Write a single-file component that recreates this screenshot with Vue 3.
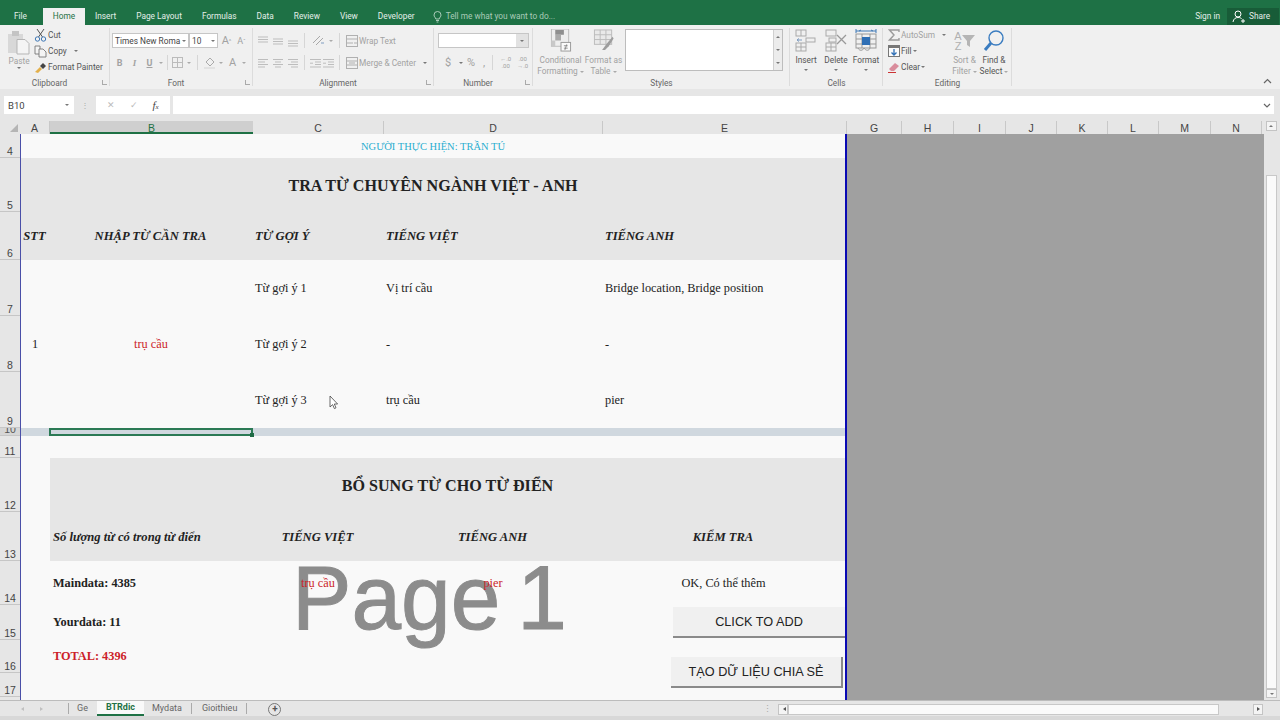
<template>
  <div class="excel">
    <!-- thanh tiêu đề -->
    <header class="titlebar">
      <div class="doc-title"><span>BTRdic - Excel</span></div>
      <div class="menu">
        <span v-for="tab in menuTabs" :key="tab" class="menu-tab" :class="{ active: tab === 'Home', file: tab === 'File' }">{{ tab }}</span>
        <span class="tell-me">
          <svg width="9" height="12" viewBox="0 0 9 12" fill="none" stroke="#b9d5c5" stroke-width="0.9"><path d="M2.8 8C2.6 6.4 1 5.9 1 4A3.5 3.5 0 0 1 8 4C8 5.9 6.4 6.4 6.2 8ZM3 9.5H6M3.6 11H5.4" /></svg>
          Tell me what you want to do...
        </span>
        <span class="sign-in">Sign in</span>
        <span class="share">
          <svg width="14" height="13" viewBox="0 0 14 13" fill="none" stroke="#fff" stroke-width="1"><circle cx="6" cy="4" r="3" /><path d="M1 12C1.5 8.8 3.5 7.5 6 7.5S9 8.2 9.8 9M9 11H13M11 9V13" /></svg>
          Share
        </span>
      </div>
    </header>

    <!-- ribbon -->
    <section class="ribbon">
      <div class="group clipboard">
        <div class="group-body">
          <div class="paste">
            <svg width="24" height="25" viewBox="0 0 24 25"><rect x="1" y="4" width="15" height="19" fill="#d8d8d8" /><rect x="5" y="1" width="7" height="5" fill="#c4c4c4" /><path d="M10 9.5H18L22 13.5V24H10Z" fill="#f4f4f4" stroke="#b5b5b5" /></svg>
            <span class="dim">Paste</span>
            <i class="caret"></i>
          </div>
          <div class="stack">
            <div class="tool">
              <svg width="13" height="14" viewBox="0 0 13 14" fill="none" stroke="#555" stroke-width="1"><path d="M3 1L8.5 9M10 1L4.5 9" /><circle cx="3.5" cy="11" r="2.2" stroke="#3f78b5" /><circle cx="9.5" cy="11" r="2.2" stroke="#3f78b5" /></svg>
              Cut
            </div>
            <div class="tool">
              <svg width="13" height="13" viewBox="0 0 13 13" fill="#f4f4f4" stroke="#777" stroke-width="0.9"><path d="M1 1H6V9H1Z" /><path d="M5 4H9L12 7V12H5Z" /></svg>
              Copy <i class="caret spaced"></i>
            </div>
            <div class="tool">
              <svg width="13" height="13" viewBox="0 0 13 13"><path d="M1 11L6 6L8 8L4 12Z" fill="#e3b04b" /><path d="M6 5L9 2L12 5L9 8Z" fill="#444" /></svg>
              Format Painter
            </div>
          </div>
        </div>
        <div class="group-label">Clipboard<i class="launcher"></i></div>
      </div>

      <div class="group font">
        <div class="group-body rows">
          <div class="line">
            <span class="combo font-name">Times New Roma<i class="caret"></i></span>
            <span class="combo font-size">10<i class="caret"></i></span>
            <span class="cell-btn grow-a">A<sup>^</sup></span>
            <span class="cell-btn shrink-a">A<sup>ˇ</sup></span>
          </div>
          <div class="line">
            <span class="cell-btn dim bold">B</span>
            <span class="cell-btn dim ital">I</span>
            <span class="cell-btn dim under">U</span>
            <i class="caret slot"></i>
            <i class="sep tight"></i>
            <span class="cell-btn">
              <svg width="11" height="11" viewBox="0 0 11 11" fill="none" stroke="#bbb"><rect x="0.5" y="0.5" width="10" height="10" /><path d="M5.5 0V11M0 5.5H11" /></svg>
            </span>
            <i class="caret slot"></i>
            <i class="sep"></i>
            <span class="cell-btn">
              <svg width="13" height="13" viewBox="0 0 13 13"><path d="M3 6L7 2L11 6L7 10Z" fill="none" stroke="#aaa" /><rect x="1" y="11" width="11" height="2" fill="#e2e2e2" /></svg>
            </span>
            <i class="caret slot"></i>
            <span class="cell-btn dim big-a">A</span>
            <i class="caret slot"></i>
          </div>
        </div>
        <div class="group-label">Font<i class="launcher"></i></div>
      </div>

      <div class="group alignment">
        <div class="group-body rows">
          <div class="line">
            <svg v-for="icon in alignTop" :key="icon" class="lines" width="15" height="12" viewBox="0 0 15 12" stroke="#bdbdbd"><path :d="icon" /></svg>
            <i class="sep"></i>
            <span class="cell-btn orient">
              <svg width="15" height="13" viewBox="0 0 15 13" fill="none" stroke="#a8a8a8"><path d="M2 9L9 2M5 11L12 4" /><path d="M10 9H13" stroke="#7f9cc0" /></svg>
            </span>
            <i class="caret slot"></i>
            <i class="sep"></i>
            <span class="tool dim wide">
              <svg width="12" height="12" viewBox="0 0 12 12" fill="none" stroke="#b0b0b0"><rect x="0.5" y="0.5" width="11" height="11" /><path d="M0 4H12M0 8H7M8 8H11" /></svg>
              Wrap Text
            </span>
          </div>
          <div class="line">
            <svg v-for="icon in alignLeft" :key="icon" class="lines" width="15" height="12" viewBox="0 0 15 12" stroke="#bdbdbd"><path :d="icon" /></svg>
            <i class="sep"></i>
            <svg v-for="icon in indents" :key="icon" class="lines" width="13" height="12" viewBox="0 0 13 12" stroke="#bdbdbd"><path :d="icon" /></svg>
            <i class="sep"></i>
            <span class="tool dim wide">
              <svg width="12" height="12" viewBox="0 0 12 12" fill="none" stroke="#b0b0b0"><rect x="0.5" y="0.5" width="11" height="11" /><path d="M0 4H12M0 8H12M3 6H9" /></svg>
              Merge &amp; Center <i class="caret spaced"></i>
            </span>
          </div>
        </div>
        <div class="group-label">Alignment<i class="launcher"></i></div>
      </div>

      <div class="group number">
        <div class="group-body rows">
          <div class="line">
            <span class="combo number-format"><b class="combo-arrow"><i class="caret"></i></b></span>
          </div>
          <div class="line num-tools">
            <span class="dim sym">$</span><i class="caret"></i>
            <span class="dim sym">%</span>
            <span class="dim comma">,</span>
            <i class="sep num-sep"></i>
            <span class="dim decimals">←.0<br />.00</span>
            <span class="dim decimals">.00<br />→.0</span>
          </div>
        </div>
        <div class="group-label">Number<i class="launcher"></i></div>
      </div>

      <div class="group styles">
        <div class="group-body">
          <div class="big-btn style-btn dim">
            <svg width="22" height="24" viewBox="0 0 22 24"><rect x="1" y="0" width="18" height="18" fill="#eee" stroke="#bbb" /><rect x="5" y="1" width="9" height="5" fill="#8f8f8f" /><rect x="5" y="6" width="6" height="6" fill="#aaa" /><rect x="1" y="12" width="4" height="6" fill="#c8c8c8" /><rect x="11" y="14" width="10" height="9" fill="#fafafa" stroke="#999" /><path d="M14 17.5H18M14 20H18M15 22L17 16" stroke="#777" fill="none" stroke-width="0.8" /></svg>
            <span>Conditional<br />Formatting <i class="caret inline"></i></span>
          </div>
          <div class="big-btn style-btn dim">
            <svg width="22" height="24" viewBox="0 0 22 24" fill="none"><rect x="1" y="1" width="18" height="15" fill="#e9e9e9" stroke="#bbb" /><path d="M7 1V16M13 1V16M1 6H19M1 11H19" stroke="#bbb" /><path d="M9 22L14 15L20 8L21 10L16 18L12 22Z" fill="#9d9d9d" /></svg>
            <span>Format as<br />Table <i class="caret inline"></i></span>
          </div>
          <div class="gallery">
            <div class="gallery-bar"><i class="caret up"></i><i class="caret"></i><i class="caret"></i></div>
          </div>
        </div>
        <div class="group-label plain">Styles</div>
      </div>

      <div class="group cells-group">
        <div class="group-body">
          <div class="big-btn cell-col">
            <svg width="22" height="23" viewBox="0 0 22 23" fill="none" stroke="#aaa"><rect x="1" y="1" width="10" height="6" /><path d="M6 1V7" /><rect x="11" y="9" width="9" height="4" /><path d="M7 11H2M4 9.5L2 11L4 12.5" stroke="#7f9cc0" /><rect x="1" y="14" width="10" height="8" /><path d="M6 14V22M1 18H11" /></svg>
            <span>Insert</span><i class="caret"></i>
          </div>
          <div class="big-btn cell-col">
            <svg width="22" height="23" viewBox="0 0 22 23" fill="none" stroke="#aaa"><rect x="1" y="1" width="10" height="6" /><rect x="4" y="9" width="7" height="4" /><rect x="1" y="14" width="10" height="8" /><path d="M6 14V22M1 18H11" /><path d="M12 6L21 15M21 6L12 15" stroke="#999" stroke-width="1.3" /></svg>
            <span>Delete</span><i class="caret"></i>
          </div>
          <div class="big-btn cell-col">
            <svg width="22" height="23" viewBox="0 0 22 23" fill="none" stroke="#999"><path d="M1 2H21M1 0V4M21 0V4M4 2L6 1M18 2L16 1" stroke="#3f78b5" /><rect x="1" y="5" width="20" height="14" /><path d="M7 5V19M15 5V19M1 10H21M1 15H21" /><rect x="7" y="8" width="8" height="8" fill="#2f6fb5" stroke="none" /><path d="M3 19C4 22 8 22 9 19M9 19C11 22 14 22 15 19" /></svg>
            <span>Format</span><i class="caret"></i>
          </div>
        </div>
        <div class="group-label plain">Cells</div>
      </div>

      <div class="group editing">
        <div class="group-body">
          <div class="stack edit-stack">
            <div class="tool dim">
              <svg width="12" height="12" viewBox="0 0 12 12" fill="none" stroke="#9a9a9a" stroke-width="1.4"><path d="M11 3V1H1.5L6 6L1.5 11H11V9" /></svg>
              AutoSum <i class="caret spaced"></i>
            </div>
            <div class="tool">
              <svg width="12" height="12" viewBox="0 0 12 12"><rect x="0.5" y="0.5" width="11" height="11" fill="#fafafa" stroke="#777" /><rect x="1" y="1" width="10" height="2" fill="#777" /><path d="M6 4V10M3.5 7.5L6 10L8.5 7.5" fill="none" stroke="#2f6fb5" stroke-width="1.3" /></svg>
              Fill <i class="caret"></i>
            </div>
            <div class="tool">
              <svg width="12" height="12" viewBox="0 0 12 12"><path d="M1 8L7 2L11 5L6 10H3Z" fill="#d98c9c" /><path d="M0 11.5H8" stroke="#c33" /></svg>
              Clear <i class="caret"></i>
            </div>
          </div>
          <div class="big-btn sort dim">
            <div class="sort-icon">
              <span class="az">A<br />Z</span>
              <svg width="13" height="13" viewBox="0 0 13 13"><path d="M0 1H13L8 7V13L5 11V7Z" fill="#b5b5b5" /></svg>
            </div>
            <span>Sort &amp;<br />Filter <i class="caret inline"></i></span>
          </div>
          <div class="big-btn find">
            <svg width="22" height="23" viewBox="0 0 22 23" fill="none" stroke="#3a7cc0"><circle cx="13" cy="9" r="7" stroke-width="1.4" /><path d="M8 14L2 21" stroke-width="3" /></svg>
            <span>Find &amp;<br />Select <i class="caret inline"></i></span>
          </div>
        </div>
        <div class="group-label plain">Editing</div>
      </div>

      <div class="ribbon-fill">
        <svg width="9" height="6" viewBox="0 0 9 6" fill="none" stroke="#666" stroke-width="1.2"><path d="M1 5L4.5 1.5L8 5" /></svg>
      </div>
    </section>

    <!-- thanh công thức -->
    <section class="formula-bar">
      <div class="name-box">B10<i class="caret"></i></div>
      <span class="dots">⋮</span>
      <div class="fx-box">
        <span class="fx-x">✕</span>
        <span class="fx-x">✓</span>
        <span class="fx">f<small>x</small></span>
      </div>
      <div class="formula-input">
        <svg width="8" height="5" viewBox="0 0 8 5" fill="none" stroke="#666" stroke-width="1.2"><path d="M1 1L4 4L7 1" /></svg>
      </div>
    </section>

    <!-- tiêu đề cột -->
    <section class="col-heads">
      <div class="corner"><i class="corner-mark"></i></div>
      <div
        v-for="col in columns"
        :key="col.name"
        class="col-head"
        :class="{ selected: col.name === 'B' }"
        :style="{ width: col.width + 'px' }"
      >
        {{ col.name }}
      </div>
      <div class="col-rest"><span class="arrow-box"><i class="caret up"></i></span></div>
    </section>

    <section class="sheet">
      <div class="row-heads">
        <div
          v-for="row in rows"
          :key="row.num"
          class="row-head"
          :class="{ selected: row.num === 10 }"
          :style="{ height: row.height + 'px' }"
        >
          {{ row.num }}
        </div>
      </div>

      <div class="cells">
        <div class="watermark">Page 1</div>

        <div class="cell all author">NGƯỜI THỰC HIỆN: TRẦN TÚ</div>
        <div class="cell all band title">TRA TỪ CHUYÊN NGÀNH VIỆT - ANH</div>

        <div class="cell band head center">STT</div>
        <div class="cell band head center">NHẬP TỪ CẦN TRA</div>
        <div class="cell band head left">TỪ GỢI Ý</div>
        <div class="cell band head left">TIẾNG VIỆT</div>
        <div class="cell band head left">TIẾNG ANH</div>

        <div class="cell center merged">1</div>
        <div class="cell center merged red">trụ cầu</div>
        <template v-for="item in suggestions" :key="item.label">
          <div class="cell left">{{ item.label }}</div>
          <div class="cell left">{{ item.vi }}</div>
          <div class="cell left">{{ item.en }}</div>
        </template>

        <div class="cell hilite"></div>
        <div class="cell hilite picked"><i class="handle"></i></div>
        <div class="cell hilite wide-3"></div>

        <div class="cell all"></div>

        <div class="cell"></div>
        <div class="cell wide-4 band title">BỔ SUNG TỪ CHO TỪ ĐIỂN</div>

        <div class="cell"></div>
        <div class="cell band head left count">Số lượng từ có trong từ điển</div>
        <div class="cell band head center">TIẾNG VIỆT</div>
        <div class="cell band head center">TIẾNG ANH</div>
        <div class="cell band head center">KIỂM TRA</div>

        <div class="cell"></div>
        <div class="cell left strong count">Maindata: 4385</div>
        <div class="cell center red">trụ cầu</div>
        <div class="cell center red">pier</div>
        <div class="cell center">OK, Có thể thêm</div>

        <div class="cell"></div>
        <div class="cell left strong count lift">Yourdata: 11</div>
        <div class="cell wide-3"></div>

        <div class="cell"></div>
        <div class="cell left strong count red lift">TOTAL: 4396</div>
        <div class="cell wide-3"></div>

        <button class="sheet-btn add-btn">CLICK TO ADD</button>
        <button class="sheet-btn share-btn">TẠO DỮ LIỆU CHIA SẺ</button>

        <svg class="pointer" width="10" height="15" viewBox="0 0 10 15"><path d="M1 1V12L3.6 9.6L5.4 13.6L7 12.8L5.3 9H8.6Z" fill="#fff" stroke="#444" stroke-width="0.8" /></svg>
      </div>

      <div class="outside"></div>

      <div class="vscroll">
        <div class="v-thumb"></div>
        <span class="arrow-box"><i class="caret"></i></span>
      </div>
    </section>

    <!-- tab sheet -->
    <footer class="tabs-bar">
      <div class="tab-nav"><i class="tri left"></i><i class="tri right"></i></div>
      <div class="sheet-tabs">
        <span v-for="tab in sheetTabs" :key="tab" class="sheet-tab" :class="{ active: tab === 'BTRdic' }">{{ tab }}</span>
      </div>
      <span class="add-sheet">+</span>
      <div class="h-scroll">
        <span class="dots">⋮</span>
        <span class="arrow-box h"><i class="tri left dark"></i></span>
        <div class="h-thumb"></div>
        <span class="arrow-box h end"><i class="tri right dark"></i></span>
      </div>
    </footer>
    <div class="status"></div>
  </div>
</template>

<script setup>
const menuTabs = ['File', 'Home', 'Insert', 'Page Layout', 'Formulas', 'Data', 'Review', 'View', 'Developer']

const alignTop = ['M3 2H13M3 4.5H13M3 7H13', 'M3 4H13M3 6.5H13M3 9H13', 'M3 6H13M3 8.5H13M3 11H13']
const alignLeft = ['M3 2.5H13M3 5H10M3 7.5H13M3 10H10', 'M3 2.5H13M5 5H11M3 7.5H13M5 10H11', 'M3 2.5H13M6 5H13M3 7.5H13M6 10H13']
const indents = ['M1 2.5H12M6 5H12M6 7.5H12M1 10H12M1 6.2H4', 'M1 2.5H12M6 5H12M6 7.5H12M1 10H12M1 6.2H4']

const columns = [
  { name: 'A', width: 30 },
  { name: 'B', width: 203 },
  { name: 'C', width: 131 },
  { name: 'D', width: 219 },
  { name: 'E', width: 244 },
  { name: 'G', width: 55 },
  { name: 'H', width: 52 },
  { name: 'I', width: 52 },
  { name: 'J', width: 51 },
  { name: 'K', width: 51 },
  { name: 'L', width: 51 },
  { name: 'M', width: 52 },
  { name: 'N', width: 51 },
]

const rows = [
  { num: 4, height: 24 },
  { num: 5, height: 54 },
  { num: 6, height: 48 },
  { num: 7, height: 56 },
  { num: 8, height: 56 },
  { num: 9, height: 56 },
  { num: 10, height: 8 },
  { num: 11, height: 22 },
  { num: 12, height: 54 },
  { num: 13, height: 49 },
  { num: 14, height: 44 },
  { num: 15, height: 35 },
  { num: 16, height: 33 },
  { num: 17, height: 24 },
]

const suggestions = [
  { label: 'Từ gợi ý 1', vi: 'Vị trí cầu', en: 'Bridge location, Bridge position' },
  { label: 'Từ gợi ý 2', vi: '-', en: '-' },
  { label: 'Từ gợi ý 3', vi: 'trụ cầu', en: 'pier' },
]

const sheetTabs = ['Ge', 'BTRdic', 'Mydata', 'Gioithieu']
</script>

<style>
html,
body {
  margin: 0;
  background: #e6e6e6;
}
</style>

<style scoped>
.excel {
  width: 1280px;
  height: 720px;
  overflow: hidden;
  display: flex;
  flex-direction: column;
  font-family: Roboto, "Liberation Sans", sans-serif;
  font-size: 8.3px;
  color: #555;
  background: #e6e6e6;
}

.caret {
  display: inline-block;
  width: 0;
  height: 0;
  border-left: 2px solid transparent;
  border-right: 2px solid transparent;
  border-top: 2px solid #777;
  flex: none;
}

.caret.up {
  border-top: 0;
  border-bottom: 2px solid #777;
}

.caret.spaced {
  margin-left: 6px;
}

.caret.inline {
  vertical-align: middle;
  border-top-color: #aaa;
}

.caret.slot {
  margin: 0 2px;
  border-top-color: #aaa;
}

.dim {
  color: #a2a2a2;
}

/* title bar */
.titlebar {
  height: 25px;
  flex: none;
  background: #1e7145;
  color: #e4efe9;
}

.doc-title {
  height: 8px;
  overflow: hidden;
  text-align: center;
  position: relative;
}

.doc-title span {
  position: absolute;
  left: 612px;
  top: -9px;
  font-size: 9px;
}

.menu {
  height: 17px;
  display: flex;
  align-items: stretch;
  line-height: 17px;
}

.menu-tab {
  padding: 0 10px;
  white-space: nowrap;
}

.menu-tab.file {
  width: 43px;
  padding: 0 0 0 14px;
  box-sizing: border-box;
}

.menu-tab.active {
  width: 42px;
  box-sizing: border-box;
  text-align: center;
  padding: 0;
  background: #f0f0f0;
  color: #1e7145;
}

.tell-me {
  display: flex;
  align-items: center;
  gap: 4px;
  margin-left: 8px;
  color: #a9cbb8;
}

.sign-in {
  margin-left: auto;
}

.share {
  display: flex;
  align-items: center;
  gap: 3px;
  width: 52px;
  margin: 0 1px 0 7px;
  padding-left: 5px;
  box-sizing: border-box;
  background: #185c38;
}

/* ribbon */
.ribbon {
  height: 64px;
  flex: none;
  display: flex;
  background: #f0f0f0;
}

.group {
  position: relative;
  display: flex;
  flex-direction: column;
  box-sizing: border-box;
  flex: none;
}

.group::after {
  content: "";
  position: absolute;
  right: 0;
  top: 3px;
  bottom: 3px;
  width: 1px;
  background: #dcdcdc;
}

.group-body {
  height: 52px;
  flex: none;
  display: flex;
}

.group-body.rows {
  flex-direction: column;
  padding: 8px 0 0 2px;
  box-sizing: border-box;
  gap: 7px;
}

.group-label {
  flex: none;
  position: relative;
  text-align: center;
  line-height: 12px;
  color: #666;
  font-size: 8.3px;
  padding-right: 11px;
}

.group-label.plain {
  padding-right: 0;
}

.launcher {
  position: absolute;
  right: 3px;
  top: 3px;
  width: 4px;
  height: 4px;
  border-left: 1px solid #aaa;
  border-bottom: 1px solid #aaa;
}

.clipboard {
  width: 110px;
}

.font {
  width: 143px;
}

.alignment {
  width: 181px;
}

.number {
  width: 99px;
}

.styles {
  width: 257px;
}

.cells-group {
  width: 93px;
}

.editing {
  width: 129px;
}

.ribbon-fill {
  flex: 1;
  display: flex;
  justify-content: flex-end;
  align-items: flex-end;
  padding: 0 8px 5px 0;
}

.paste {
  width: 28px;
  margin-left: 5px;
  padding-top: 5px;
  display: flex;
  flex-direction: column;
  align-items: center;
  gap: 1px;
}

.stack {
  display: flex;
  flex-direction: column;
  margin-left: 1px;
  padding-top: 2px;
}

.tool {
  height: 16px;
  display: flex;
  align-items: center;
  gap: 1px;
  white-space: nowrap;
}

.line {
  height: 15px;
  display: flex;
  align-items: center;
}

.combo {
  height: 15px;
  box-sizing: border-box;
  background: #fff;
  border: 1px solid #c6c6c6;
  display: flex;
  align-items: center;
  justify-content: space-between;
  padding: 0 2px;
  color: #444;
  white-space: nowrap;
  overflow: hidden;
}

.font-name {
  width: 77px;
}

.font-size {
  width: 29px;
}

.cell-btn {
  width: 15px;
  display: flex;
  justify-content: center;
  align-items: center;
  flex: none;
  color: #a2a2a2;
  font-size: 9px;
}

.cell-btn sup {
  font-size: 6px;
  line-height: 0;
}

.grow-a {
  margin-left: 1px;
  font-size: 11px;
}

.shrink-a {
  font-size: 9px;
}

.bold {
  font-weight: 700;
}

.ital {
  font-style: italic;
  font-family: "Liberation Serif", serif;
  font-weight: 700;
}

.under {
  text-decoration: underline;
  font-weight: 700;
}

.big-a {
  font-size: 11px;
}

.sep {
  width: 1px;
  height: 15px;
  margin: 0 4px;
  flex: none;
  background: #d6d6d6;
}

.sep.tight {
  margin: 0 2px;
}

.sep.num-sep {
  margin: 0 2px;
}

.lines {
  flex: none;
  fill: none;
}

.wide {
  margin-left: 2px;
}

.orient {
  width: 18px;
}

.number-format {
  width: 91px;
  margin-left: 2px;
  padding: 0;
  justify-content: flex-end;
}

.combo-arrow {
  width: 12px;
  height: 13px;
  background: #e2e2e2;
  display: flex;
  align-items: center;
  justify-content: center;
}

.num-tools {
  padding-left: 9px;
  gap: 4px;
}

.sym {
  font-size: 11px;
  width: 10px;
}

.comma {
  font-size: 11px;
  margin: 0 1px 0 2px;
}

.decimals {
  font-size: 6px;
  line-height: 6.5px;
  width: 13px;
  text-align: center;
}

.big-btn {
  display: flex;
  flex-direction: column;
  align-items: center;
  line-height: 11px;
  text-align: center;
  white-space: nowrap;
}

.style-btn {
  width: 43px;
  padding-top: 4px;
  gap: 3px;
}

.style-btn:first-child {
  margin-left: 6px;
}

.gallery {
  width: 158px;
  height: 42px;
  margin-top: 4px;
  box-sizing: border-box;
  background: #fff;
  border: 1px solid #bdbdbd;
  display: flex;
  justify-content: flex-end;
}

.gallery-bar {
  width: 8px;
  background: #ececec;
  border-left: 1px solid #d0d0d0;
  display: flex;
  flex-direction: column;
  align-items: center;
  justify-content: space-around;
}

.cell-col {
  width: 30px;
  padding-top: 4px;
  gap: 3px;
}

.cell-col:first-child {
  margin-left: 1px;
}

.edit-stack {
  width: 62px;
  margin-left: 5px;
}

.sort {
  width: 29px;
  padding-top: 4px;
}

.sort-icon {
  height: 24px;
  display: flex;
  align-items: center;
  gap: 0;
  margin-bottom: 3px;
}

.az {
  font-family: "Liberation Sans", sans-serif;
  font-size: 11px;
  line-height: 10px;
  color: #b0b0b0;
}

.find {
  width: 30px;
  padding-top: 4px;
  gap: 3px;
}

/* formula bar */
.formula-bar {
  height: 18px;
  flex: none;
  margin-top: 7px;
  display: flex;
  align-items: stretch;
}

.name-box {
  width: 70px;
  margin-left: 4px;
  box-sizing: border-box;
  padding: 0 5px 0 4px;
  background: #fff;
  display: flex;
  align-items: center;
  justify-content: space-between;
  font-size: 9.5px;
  color: #444;
}

.dots {
  width: 22px;
  text-align: center;
  color: #aaa;
  line-height: 18px;
}

.fx-box {
  width: 74px;
  background: #fff;
  display: flex;
  align-items: center;
  justify-content: space-around;
  padding: 0 4px;
  box-sizing: border-box;
}

.fx-x {
  color: #bbb;
  font-size: 9px;
}

.fx {
  font-family: "Liberation Serif", serif;
  font-style: italic;
  font-size: 11px;
  color: #444;
}

.fx small {
  font-size: 7px;
}

.formula-input {
  width: 1101px;
  margin-left: 3px;
  background: #fff;
  display: flex;
  align-items: center;
  justify-content: flex-end;
  padding-right: 3px;
  box-sizing: border-box;
}

/* column and row headers */
.col-heads {
  height: 13px;
  flex: none;
  margin-top: 7px;
  display: flex;
  font-family: "Liberation Sans", sans-serif;
  font-size: 10.5px;
  line-height: 15px;
  color: #444;
}

.corner {
  width: 20px;
  position: relative;
}

.corner-mark {
  position: absolute;
  right: 2px;
  bottom: 2px;
  width: 0;
  height: 0;
  border-left: 8px solid transparent;
  border-bottom: 8px solid #b5b5b5;
}

.col-head {
  flex: none;
  box-sizing: border-box;
  text-align: center;
  border-right: 1px solid #c8c8c8;
  overflow: hidden;
}

.col-head.selected {
  background: #cfcfcf;
  border-bottom: 2px solid #1e7145;
  border-right: 0;
  color: #1e7145;
  line-height: 14px;
}

.col-rest {
  flex: 1;
  display: flex;
  justify-content: center;
}

.arrow-box {
  width: 11px;
  height: 10px;
  background: #f4f4f4;
  border: 1px solid #c4c4c4;
  box-sizing: border-box;
  display: flex;
  align-items: center;
  justify-content: center;
  flex: none;
}

.sheet {
  height: 566px;
  flex: none;
  display: flex;
}

.row-heads {
  width: 20px;
  flex: none;
  font-family: "Liberation Sans", sans-serif;
  font-size: 10.5px;
  color: #444;
}

.row-head {
  box-sizing: border-box;
  overflow: hidden;
  display: flex;
  justify-content: center;
  align-items: flex-end;
  border-bottom: 1px solid #c6c6c6;
  line-height: 11px;
}

.row-head.selected {
  background: #d6d6d6;
  color: #555;
}

/* sheet */
.cells {
  width: 827px;
  flex: none;
  box-sizing: border-box;
  position: relative;
  background: #f9f9f9;
  border-left: 1px solid #4a4fa8;
  border-right: 2px solid #0a0ab4;
  display: grid;
  grid-template-columns: 29px 203px 131px 219px 242px;
  grid-template-rows: 24px 54px 48px 56px 56px 56px 8px 22px 54px 49px 44px 35px 33px;
  font-family: "Liberation Serif", serif;
  font-size: 12.3px;
  color: #222;
  align-content: start;
}

.cell {
  display: flex;
  align-items: center;
  white-space: nowrap;
  min-width: 0;
  padding-top: 1px;
  box-sizing: border-box;
}

.center {
  justify-content: center;
  padding-right: 1px;
}

.head.center {
  padding-right: 2px;
}

.left {
  padding-left: 2px;
}

.all {
  grid-column: span 5;
  justify-content: center;
}

.wide-4 {
  grid-column: span 4;
  justify-content: center;
}

.wide-3 {
  grid-column: span 3;
}

.merged {
  grid-row: span 3;
}

.author {
  color: #2aaed0;
  font-size: 10.5px;
}

.band {
  background: #e6e6e6;
}

.title {
  font-size: 16.1px;
  font-weight: 700;
}

.head {
  font-size: 12.6px;
  font-weight: 700;
  font-style: italic;
}

.count {
  padding-left: 3px;
}

.strong {
  font-weight: 700;
}

.lift {
  padding-top: 0;
  padding-bottom: 1px;
}

.red {
  position: relative;
  z-index: 1;
  color: #cc1f2a;
}

.hilite {
  background: #d0d8df;
}

.picked {
  position: relative;
  box-sizing: border-box;
  border: 2px solid #2b7a55;
  margin-left: -1px;
}

.handle {
  position: absolute;
  right: -3px;
  bottom: -3px;
  width: 4px;
  height: 4px;
  background: #1e6b45;
}

.watermark {
  position: absolute;
  left: 271px;
  top: 418px;
  font-family: "Liberation Sans", sans-serif;
  font-size: 91px;
  line-height: 1;
  color: #8c8c8c;
  white-space: nowrap;
  word-spacing: -8px;
  -webkit-text-stroke: 1px #8c8c8c;
  transform: scaleX(0.98);
  transform-origin: left top;
}

.sheet-btn {
  position: absolute;
  width: 172px;
  box-sizing: border-box;
  border: 0;
  padding: 0;
  background: #f0f0f0;
  font-family: "Liberation Sans", sans-serif;
  font-size: 12.7px;
  color: #222;
  z-index: 2;
}

.add-btn {
  left: 652px;
  top: 473px;
  height: 31px;
  border-bottom: 2px solid #8a8a8a;
}

.share-btn {
  left: 650px;
  top: 523px;
  height: 31px;
  border-bottom: 2px solid #8a8a8a;
  border-right: 2px solid #8a8a8a;
}

.pointer {
  position: absolute;
  left: 308px;
  top: 261px;
  z-index: 2;
}

.outside {
  flex: 1;
  background: #a0a0a0;
}

.vscroll {
  width: 16px;
  flex: none;
  box-sizing: border-box;
  padding: 41px 3px 2px 2px;
  display: flex;
  flex-direction: column;
  gap: 0;
}

.v-thumb {
  flex: 1;
  background: #fafafa;
  border: 1px solid #c8c8c8;
  box-sizing: border-box;
}

.vscroll .arrow-box {
  height: 9px;
}

/* sheet tabs */
.tabs-bar {
  height: 16px;
  flex: none;
  display: flex;
  align-items: stretch;
  box-sizing: border-box;
  border-top: 1px solid #bcbcbc;
  color: #666;
  font-size: 9px;
  line-height: 15px;
}

.tab-nav {
  width: 69px;
  display: flex;
  align-items: center;
  padding-left: 19px;
  gap: 16px;
  box-sizing: border-box;
  border-right: 1px solid #aaa;
  margin: 2px 0;
}

.tri {
  width: 0;
  height: 0;
  border-top: 2px solid transparent;
  border-bottom: 2px solid transparent;
}

.tri.left {
  border-right: 3px solid #c0c0c0;
}

.tri.right {
  border-left: 3px solid #c0c0c0;
}

.tri.dark.left {
  border-right-color: #555;
}

.tri.dark.right {
  border-left-color: #555;
}

.sheet-tabs {
  display: flex;
}

.sheet-tab {
  padding: 0 9px;
  position: relative;
}

.sheet-tab:first-child {
  padding-left: 8px;
}

.sheet-tab:nth-child(3),
.sheet-tab:nth-child(4) {
  padding: 0 9px 0 8px;
  border-right: 1px solid #aaa;
  margin: 2px 0;
  line-height: 11px;
}

.sheet-tab:nth-child(4) {
  padding: 0 9px 0 10px;
}

.sheet-tab.active {
  background: #f9f9f9;
  color: #1e7145;
  font-weight: 700;
  border-bottom: 2px solid #1e7145;
  line-height: 13px;
  box-sizing: border-box;
  height: 15px;
}

.add-sheet {
  width: 11px;
  height: 11px;
  margin: 2px 0 0 21px;
  border: 1px solid #777;
  border-radius: 50%;
  text-align: center;
  line-height: 10px;
  font-size: 10px;
  color: #555;
  font-weight: 700;
}

.h-scroll {
  position: absolute;
  left: 756px;
  top: 703px;
  width: 508px;
  height: 12px;
  display: flex;
  align-items: center;
}

.h-scroll .dots {
  line-height: 12px;
}

.arrow-box.h {
  width: 10px;
  height: 11px;
}

.arrow-box.end {
  margin-left: 34px;
}

.h-thumb {
  width: 431px;
  height: 11px;
  background: #fafafa;
  border: 1px solid #c8c8c8;
  box-sizing: border-box;
}

.status {
  height: 4px;
  flex: none;
  background: #d8d8d8;
}
</style>
